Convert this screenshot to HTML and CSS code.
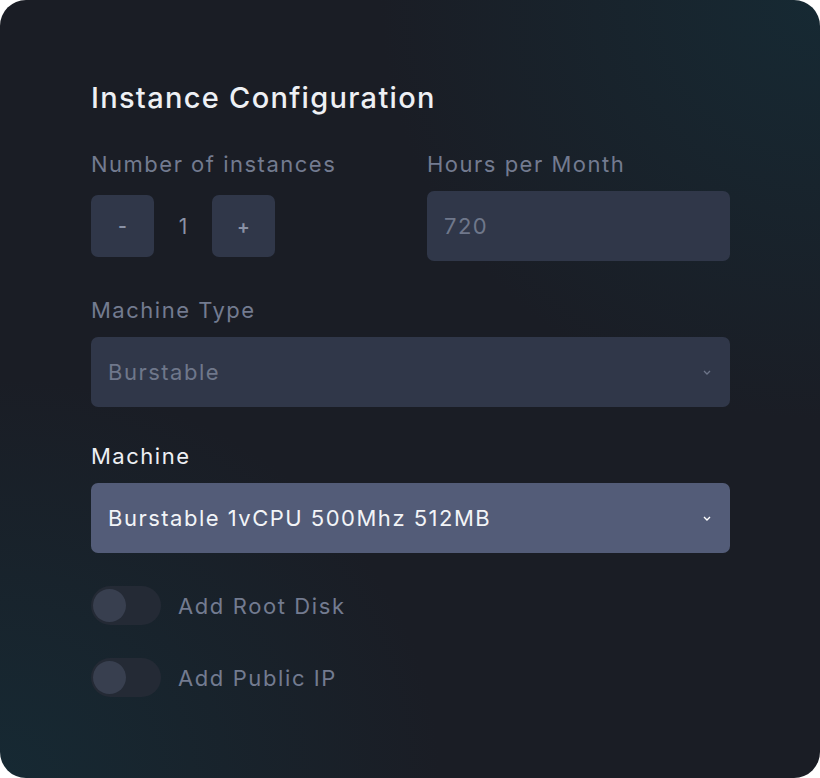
FILE: index.html
```html
<!DOCTYPE html>
<html>
<head>
<meta charset="utf-8">
<link rel="stylesheet" href="styles.css">
</head>
<body>
<div class="card">
  <h1 class="title">Instance Configuration</h1>
  <div class="row">
    <div class="field">
      <div class="label">Number of instances</div>
      <div class="counter">
        <div class="btn">-</div>
        <div class="count">1</div>
        <div class="btn">+</div>
      </div>
    </div>
    <div class="field hours">
      <div class="label">Hours per Month</div>
      <div class="input">720</div>
    </div>
  </div>
  <div class="field block">
    <div class="label">Machine Type</div>
    <div class="input select">Burstable<span class="chev"><svg width="8" height="5" viewBox="0 0 8 5"><path d="M1 1l3 3 3-3" fill="none" stroke="#6d7589" stroke-width="1.3"/></svg></span></div>
  </div>
  <div class="field block">
    <div class="label active">Machine</div>
    <div class="input select on">Burstable 1vCPU 500Mhz 512MB<span class="chev"><svg width="8" height="5" viewBox="0 0 8 5"><path d="M1 1l3 3 3-3" fill="none" stroke="#ffffff" stroke-width="1.4"/></svg></span></div>
  </div>
  <div class="toggles">
    <div class="toggle-row"><div class="toggle"><div class="knob"></div></div><span class="tlabel">Add Root Disk</span></div>
    <div class="toggle-row"><div class="toggle"><div class="knob"></div></div><span class="tlabel">Add Public IP</span></div>
  </div>
</div>
</body>
</html>
```
FILE: styles.css
```css
html, body { margin: 0; padding: 0; background: #ffffff; }
body { width: 820px; height: 778px; font-family: Inter, "Open Sans", sans-serif; }
.card {
  box-sizing: border-box;
  width: 820px; height: 778px;
  border-radius: 26px;
  background:
    radial-gradient(ellipse 440px 420px at 100% 0%, rgba(22,42,52,0.95), rgba(22,42,52,0) 100%),
    radial-gradient(ellipse 440px 400px at 0% 100%, rgba(22,42,52,0.95), rgba(22,42,52,0) 100%),
    #1a1d25;
  padding: 80px 90px 0 91px;
}
.title { margin: 0; font-size: 29px; font-weight: 500; color: #eef0f4; line-height: 36px; letter-spacing: 1.3px; }
.row { display: flex; margin-top: 33px; }
.field { display: flex; flex-direction: column; }
.row .field:first-child { width: 336px; }
.hours { flex: 1; }
.label { font-size: 22px; color: #737b90; line-height: 30px; letter-spacing: 1.5px; }
.label.active { color: #eef0f4; }
.counter { display: flex; align-items: center; margin-top: 16px; }
.btn { width: 63px; height: 62px; border-radius: 7px; background: #303749; color: #8a92a6; display: flex; align-items: center; justify-content: center; font-size: 19px; font-weight: 600; }
.count { width: 58px; text-align: center; color: #8a92a6; font-size: 21px; }
.input {
  box-sizing: border-box; height: 70px; border-radius: 7px; background: #303749;
  color: #6f778b; font-size: 22px; letter-spacing: 1.5px; display: flex; align-items: center; padding: 0 17px;
}
.hours .input { margin-top: 12px; }
.block { margin-top: 34px; }
.block + .block { margin-top: 34px; }
.block .label { margin-bottom: 12px; }
.select { justify-content: space-between; }
.chev { display: flex; margin-right: 2px; }
.select.on { background: #535c78; color: #f2f4f7; }
.toggles { margin-top: 33px; display: flex; flex-direction: column; gap: 33px; }
.toggle-row { display: flex; align-items: center; }
.toggle { width: 70px; height: 39px; border-radius: 20px; background: #242a35; position: relative; margin-right: 17px; }
.knob { position: absolute; left: 2px; top: 3px; width: 33px; height: 33px; border-radius: 50%; background: #383f4f; }
.tlabel { font-size: 22px; color: #737b90; letter-spacing: 1.6px; }
```
